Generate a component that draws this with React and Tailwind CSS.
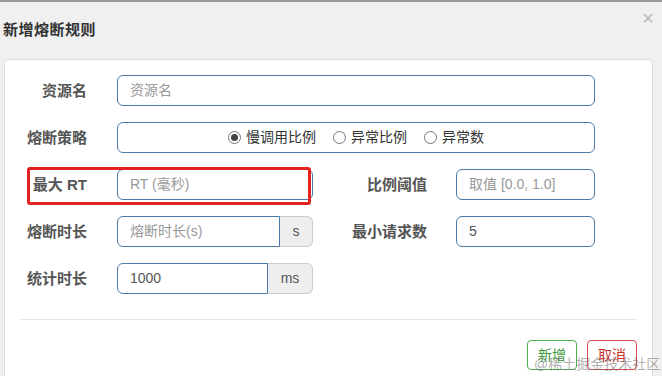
export default function App() {
  const font = "font-['Liberation_Sans','Noto_Sans_CJK_SC',sans-serif]";
  const label = "shrink-0 text-right text-[15px] font-bold text-[#555] leading-none";
  const input =
    "h-[31px] border border-[#4a78a6] bg-white px-[12px] flex items-center text-[14px]";
  const Radio = ({ checked }) => (
    <span className="relative inline-flex w-[13px] h-[13px] rounded-full border border-[#777] bg-white items-center justify-center">
      {checked && <span className="w-[7px] h-[7px] rounded-full bg-[#444]" />}
    </span>
  );
  return (
    <div className={`relative w-[662px] h-[376px] overflow-hidden bg-[#f0f0f0] border-t-2 border-[#9a9a9a] ${font}`}>
      <div className="h-[57px] flex items-center pl-[3px]">
        <span className="text-[15px] font-bold text-[#333] tracking-[0.5px]">新增熔断规则</span>
      </div>
      <div className="absolute right-[8px] top-[6px] text-[20px] leading-none text-[#b5b5b5]">×</div>
      <div className="ml-[4px] mr-[9px] h-[330px] bg-white border border-[#dcdcdc] rounded-t-[4px] pt-[15px]">
        <div className="flex flex-col gap-[16px]">
          <div className="flex items-center">
            <div className={`${label} w-[82px]`}>资源名</div>
            <div className={`${input} ml-[30px] w-[478px] rounded-[6px] text-[#999]`}>资源名</div>
          </div>
          <div className="flex items-center">
            <div className={`${label} w-[82px]`}>熔断策略</div>
            <div className={`${input} ml-[30px] w-[478px] rounded-[6px] justify-center gap-[17px] text-[#333]`}>
              <span className="flex items-center gap-[5px]"><Radio checked />慢调用比例</span>
              <span className="flex items-center gap-[5px]"><Radio />异常比例</span>
              <span className="flex items-center gap-[5px]"><Radio />异常数</span>
            </div>
          </div>
          <div className="flex items-center">
            <div className={`${label} w-[82px]`}>最大 RT</div>
            <div className={`${input} ml-[30px] w-[196px] rounded-[6px] text-[#999]`}>RT (毫秒)</div>
            <div className={`${label} w-[114px]`}>比例阈值</div>
            <div className={`${input} ml-[29px] w-[139px] rounded-[6px] text-[#999]`}>取值 [0.0, 1.0]</div>
          </div>
          <div className="flex items-center">
            <div className={`${label} w-[82px]`}>熔断时长</div>
            <div className="ml-[30px] flex w-[196px]">
              <div className={`${input} w-[163px] rounded-l-[6px] text-[#999]`}>熔断时长(s)</div>
              <div className="h-[31px] w-[33px] border border-l-0 border-[#ccc] bg-[#eeeeee] rounded-r-[6px] flex items-center justify-center text-[14px] text-[#555]">s</div>
            </div>
            <div className={`${label} w-[114px]`}>最小请求数</div>
            <div className={`${input} ml-[29px] w-[139px] rounded-[6px] text-[#555]`}>5</div>
          </div>
          <div className="flex items-center">
            <div className={`${label} w-[82px]`}>统计时长</div>
            <div className="ml-[30px] flex w-[196px]">
              <div className={`${input} w-[151px] rounded-l-[6px] text-[#555]`}>1000</div>
              <div className="h-[31px] w-[45px] border border-l-0 border-[#ccc] bg-[#eeeeee] rounded-r-[6px] flex items-center justify-center text-[14px] text-[#555]">ms</div>
            </div>
          </div>
        </div>
        <div className="mx-[15px] mt-[25px] border-t border-[#e5e5e5]" />
        <div className="flex justify-end gap-[10px] mr-[15px] mt-[20px]">
          <div className="w-[50px] h-[30px] border border-[#4cae4c] rounded-[4px] flex items-center justify-center text-[14px] text-[#3d9a3d]">新增</div>
          <div className="w-[50px] h-[30px] border border-[#d04a4a] rounded-[4px] flex items-center justify-center text-[14px] text-[#c9302c]">取消</div>
        </div>
      </div>
      <div className="absolute left-[27px] top-[165px] w-[284px] h-[38px] border-[3px] border-[#e3211f] rounded-[3px]" />
      <div className="absolute left-[534px] top-[355px] text-[14px] leading-none text-[rgba(110,110,110,0.55)] whitespace-nowrap">@稀土掘金技术社区</div>
    </div>
  );
}
